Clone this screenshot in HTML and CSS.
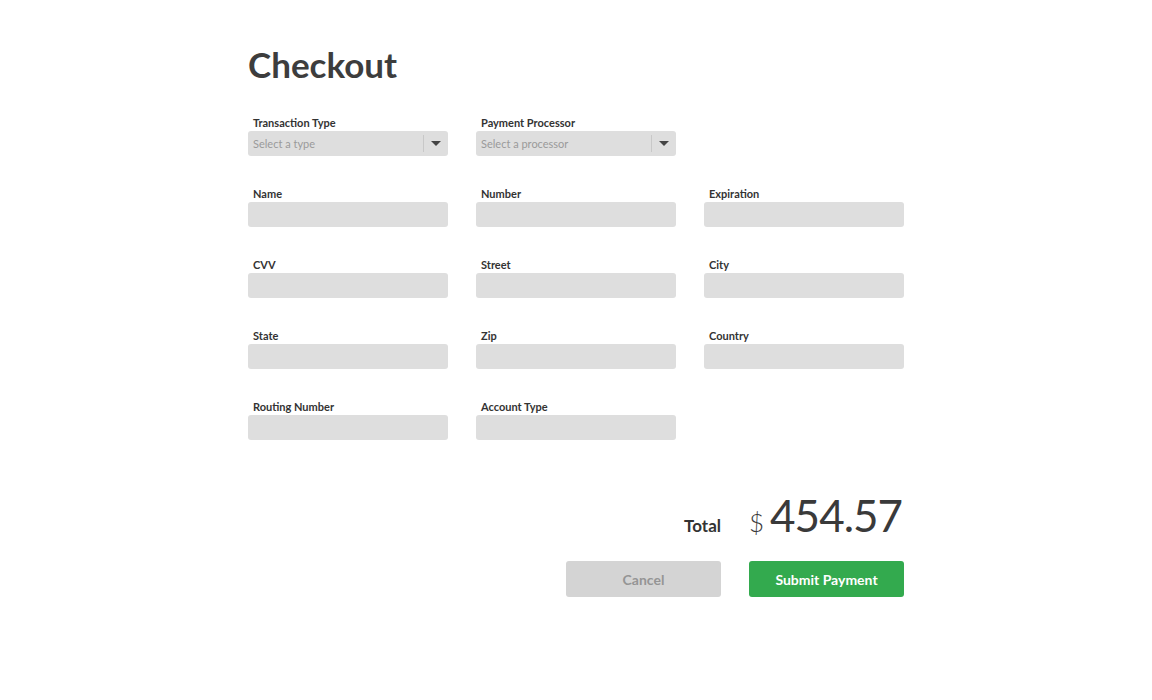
FILE: index.html
```html
<!DOCTYPE html>
<html>
<head>
<meta charset="utf-8">
<link rel="stylesheet" href="styles.css">
</head>
<body>
<main class="checkout">
  <h1 class="title">Checkout</h1>
  <div class="grid">
    <div class="field">
      <label class="label">Transaction Type</label>
      <div class="select"><span class="placeholder">Select a type</span><span class="caret-box"><span class="caret"></span></span></div>
    </div>
    <div class="field">
      <label class="label">Payment Processor</label>
      <div class="select"><span class="placeholder">Select a processor</span><span class="caret-box"><span class="caret"></span></span></div>
    </div>
    <div class="field empty"></div>

    <div class="field"><label class="label">Name</label><div class="input"></div></div>
    <div class="field"><label class="label">Number</label><div class="input"></div></div>
    <div class="field"><label class="label">Expiration</label><div class="input"></div></div>

    <div class="field"><label class="label">CVV</label><div class="input"></div></div>
    <div class="field"><label class="label">Street</label><div class="input"></div></div>
    <div class="field"><label class="label">City</label><div class="input"></div></div>

    <div class="field"><label class="label">State</label><div class="input"></div></div>
    <div class="field"><label class="label">Zip</label><div class="input"></div></div>
    <div class="field"><label class="label">Country</label><div class="input"></div></div>

    <div class="field"><label class="label">Routing Number</label><div class="input"></div></div>
    <div class="field"><label class="label">Account Type</label><div class="input"></div></div>
  </div>

  <div class="summary">
    <div class="total-row">
      <span class="total-label">Total</span>
      <span class="amount"><span class="currency">$</span><span class="value">454.57</span></span>
    </div>
    <div class="actions">
      <button class="btn btn-cancel">Cancel</button>
      <button class="btn btn-submit">Submit Payment</button>
    </div>
  </div>
</main>
</body>
</html>
```

FILE: styles.css
```css
* { box-sizing: border-box; }
body {
  margin: 0;
  background: #fff;
  font-family: "Lato", "Open Sans", sans-serif;
  color: #3a3a3a;
}
.checkout {
  width: 656px;
  margin: 0 auto;
  padding-top: 42px;
}
.title {
  margin: 0 0 30px 0;
  font-size: 35px;
  line-height: 44px;
  font-weight: 700;
  color: #3d3d3d;
}
.grid {
  display: grid;
  grid-template-columns: repeat(3, 200px);
  column-gap: 28px;
  row-gap: 31px;
}
.field {
  display: flex;
  flex-direction: column;
}
.label {
  font-size: 11px;
  font-weight: 700;
  line-height: 14px;
  padding-left: 5px;
  margin-bottom: 1px;
  color: #333;
}
.input, .select {
  height: 25px;
  background: #dedede;
  border-radius: 3px;
}
.select {
  display: flex;
  align-items: center;
}
.placeholder {
  flex: 1;
  padding-left: 5px;
  font-size: 11px;
  color: #9a9a9a;
}
.caret-box {
  width: 25px;
  height: 17px;
  border-left: 1px solid #c8c8c8;
  display: flex;
  align-items: center;
  justify-content: center;
}
.caret {
  width: 0;
  height: 0;
  border-left: 5px solid transparent;
  border-right: 5px solid transparent;
  border-top: 5px solid #444;
}
.summary {
  display: flex;
  flex-direction: column;
  align-items: flex-end;
  margin-top: 47px;
}
.total-row, .actions {
  display: grid;
  grid-template-columns: 155px 155px;
  column-gap: 28px;
}
.total-row {
  align-items: baseline;
}
.total-label {
  text-align: right;
  font-size: 17px;
  font-weight: 700;
  color: #333;
}
.amount {
  white-space: nowrap;
}
.currency {
  font-size: 26px;
  font-weight: 300;
  margin-right: 6px;
}
.value {
  font-size: 44px;
  letter-spacing: -1px;
  font-weight: 400;
  line-height: 56px;
}
.actions {
  margin-top: 18px;
}
.btn {
  height: 36px;
  border: none;
  border-radius: 3px;
  font-family: inherit;
  font-size: 14px;
  font-weight: 700;
}
.btn-cancel {
  background: #d4d4d4;
  color: #959595;
}
.btn-submit {
  background: #33aa4e;
  color: #fff;
}
```
